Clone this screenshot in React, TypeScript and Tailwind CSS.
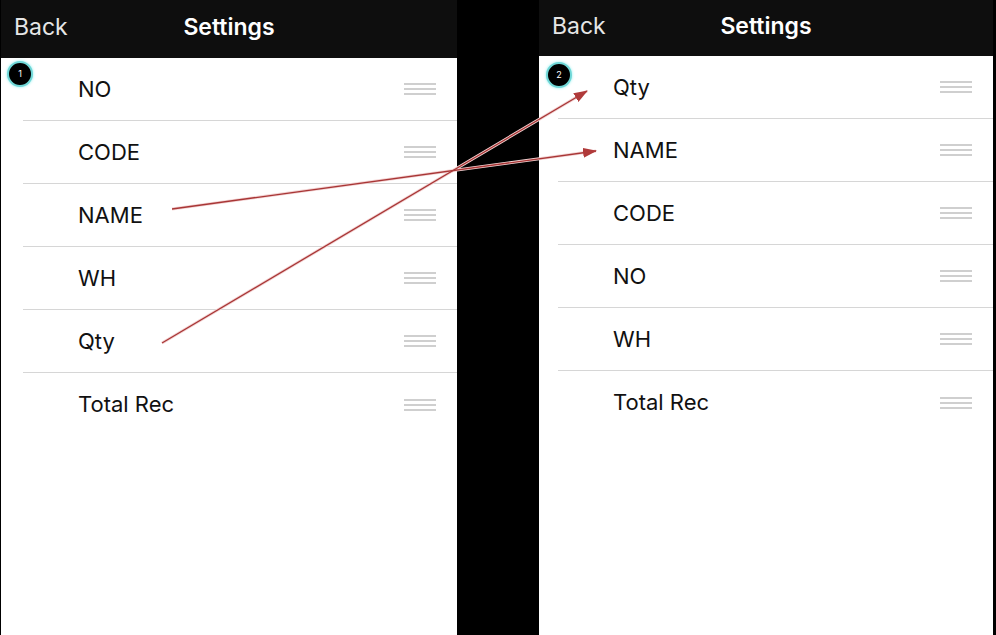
import React from 'react';

const font = { fontFamily: '"Inter", "Roboto", "Liberation Sans", sans-serif' };

function Handle() {
  return (
    <div className="flex flex-col gap-[3px] w-[32px]">
      <div className="h-[2px] bg-[#cfcfcf]" />
      <div className="h-[2px] bg-[#cfcfcf]" />
      <div className="h-[2px] bg-[#cfcfcf]" />
    </div>
  );
}

function Badge({ n, className }: { n: string; className: string }) {
  return (
    <div
      className={`absolute w-[26px] h-[26px] rounded-full bg-black border-2 border-[#6fd6d6] shadow-[0_0_3px_#8ee] flex items-center justify-center text-white text-[9px] ${className}`}
    >
      {n}
    </div>
  );
}

function Panel({
  items,
  headerH,
  badge,
  rowInset,
  badgePos,
}: {
  items: string[];
  headerH: string;
  badge: string;
  rowInset: string;
  badgePos: string;
}) {
  return (
    <div className="relative flex flex-col bg-white h-full">
      <div className={`${headerH} bg-[#0e0e0e] flex items-center relative text-[23px] text-[#e6e6e6] pb-[4px]`}>
        <span className="pl-[13px]">Back</span>
        <span className="absolute left-0 right-0 text-center font-semibold text-white">Settings</span>
      </div>
      <Badge n={badge} className={badgePos} />
      {items.map((label, i) => (
        <div
          key={label}
          className={`${rowInset} h-[63px] flex items-center pl-[55px] pr-[21px] ${
            i < items.length - 1 ? 'border-b border-[#d6d6d6]' : ''
          }`}
        >
          <span className="flex-1 text-[22px] text-[#111]">{label}</span>
          <Handle />
        </div>
      ))}
    </div>
  );
}

export default function App() {
  return (
    <div className="relative w-[996px] h-[635px] bg-black flex overflow-hidden" style={font}>
      <div className="ml-[1px] w-[456px] h-full">
        <Panel
          items={['NO', 'CODE', 'NAME', 'WH', 'Qty', 'Total Rec']}
          headerH="h-[58px]"
          badge="1"
          rowInset="ml-[22px]"
          badgePos="left-[6px] top-[61px]"
        />
      </div>
      <div className="ml-[82px] w-[454px] h-full">
        <Panel
          items={['Qty', 'NAME', 'CODE', 'NO', 'WH', 'Total Rec']}
          headerH="h-[56px]"
          badge="2"
          rowInset="ml-[19px]"
          badgePos="left-[7px] top-[62px]"
        />
      </div>

      {/* annotation arrows drawn over both screens */}
      <svg className="absolute inset-0 pointer-events-none" width="996" height="635">
        <defs>
          <marker id="head" markerWidth="14" markerHeight="10" refX="13" refY="5" orient="auto" markerUnits="userSpaceOnUse">
            <path d="M0,0 L14,5 L0,10 Z" fill="#b03a3a" />
          </marker>
        </defs>
        <line x1="172" y1="209" x2="596" y2="151" stroke="#f3d3d3" strokeWidth="3" />
        <line x1="162" y1="343" x2="587" y2="91" stroke="#f3d3d3" strokeWidth="3" />
        <line x1="172" y1="209" x2="596" y2="151" stroke="#a83636" strokeWidth="1.3" markerEnd="url(#head)" />
        <line x1="162" y1="343" x2="587" y2="91" stroke="#a83636" strokeWidth="1.3" markerEnd="url(#head)" />
      </svg>
    </div>
  );
}
